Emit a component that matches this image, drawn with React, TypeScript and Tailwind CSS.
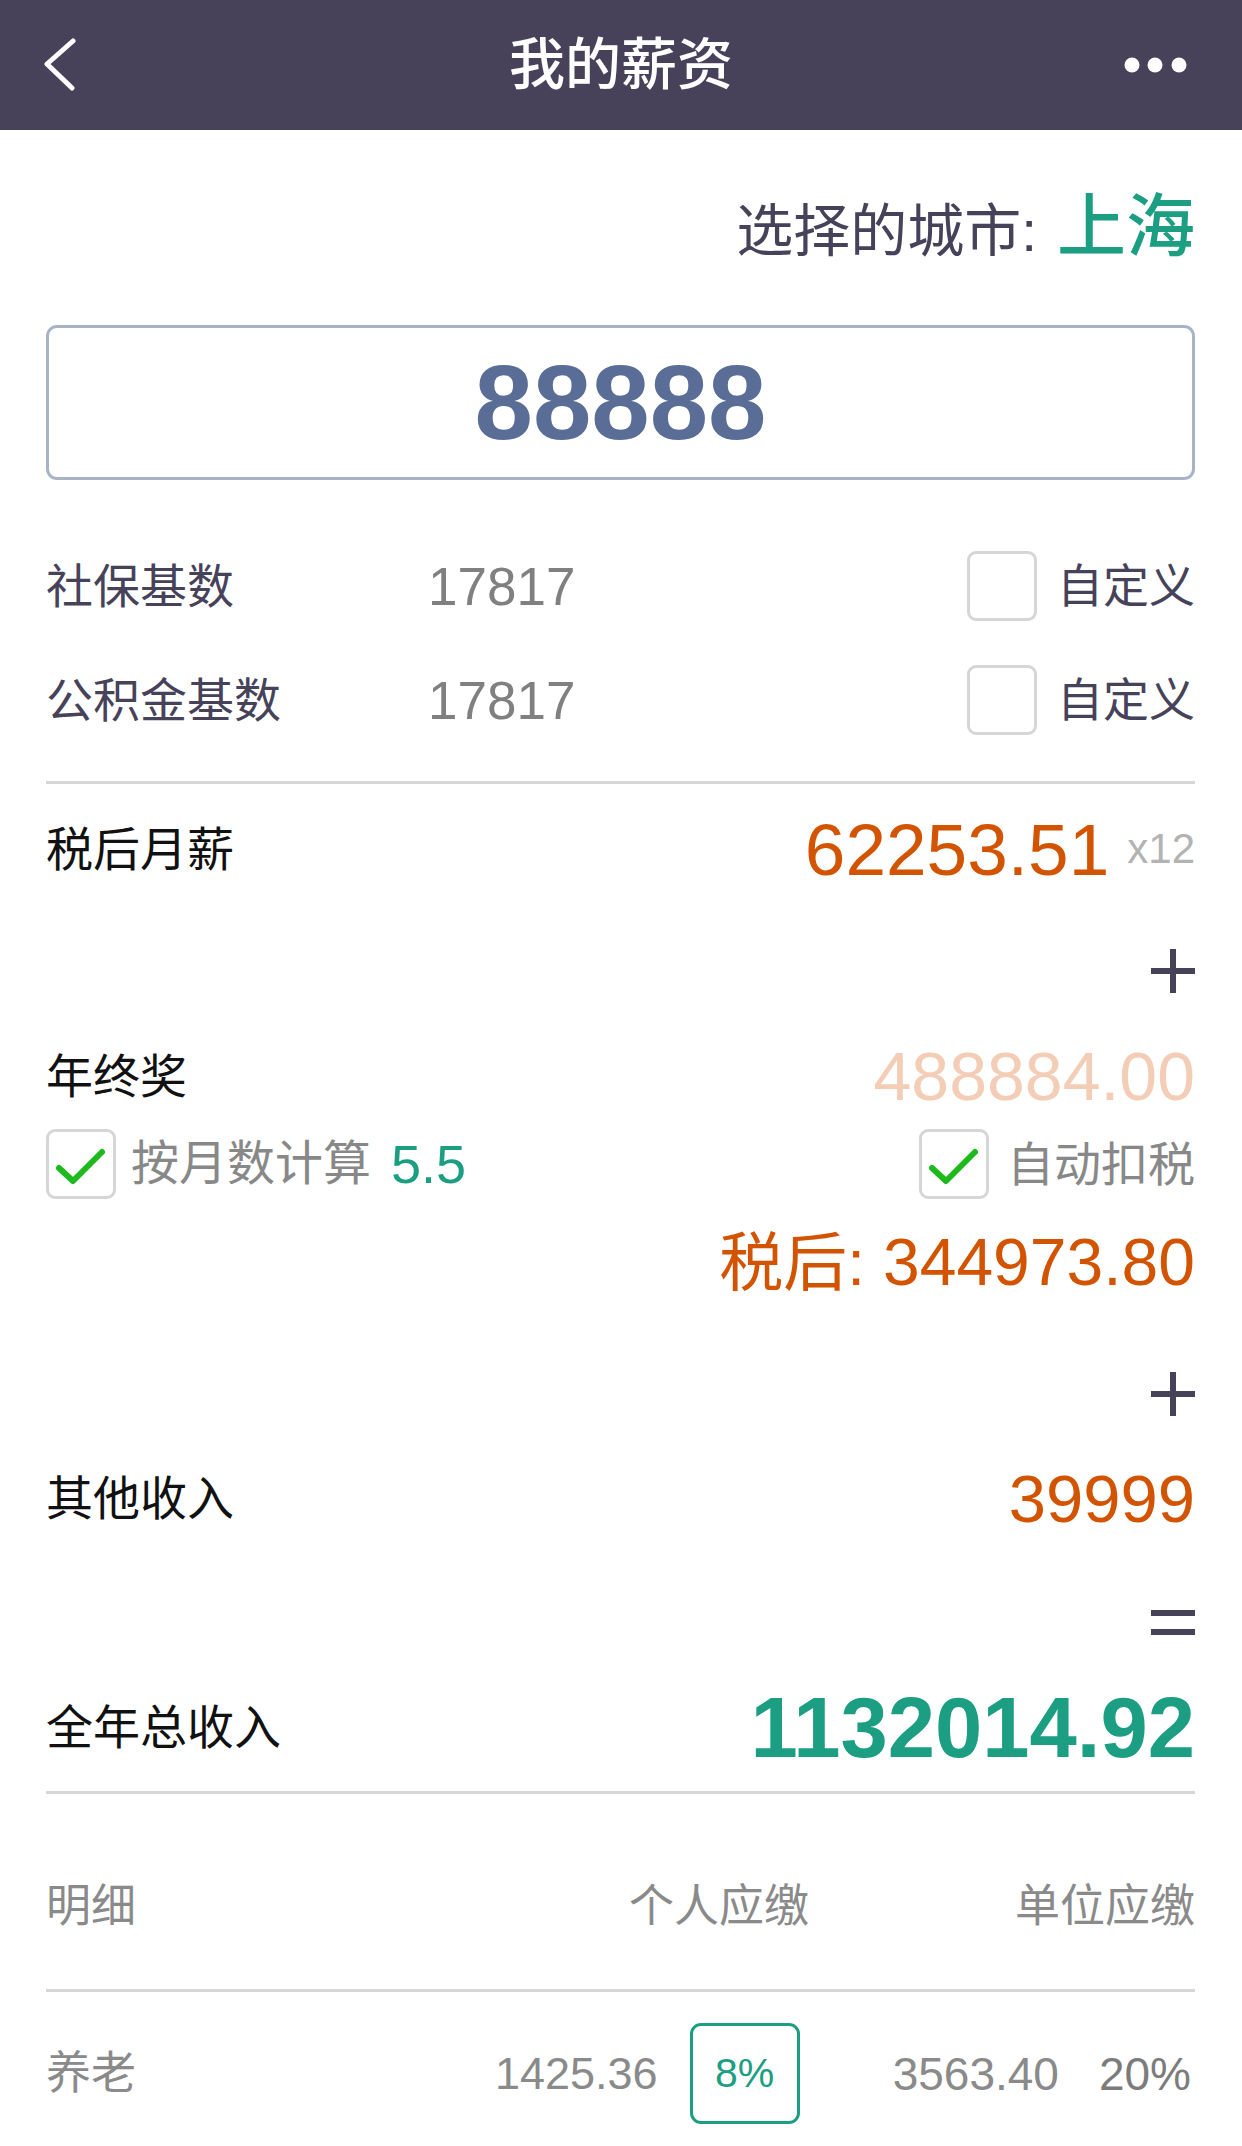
import React from 'react'

const GREEN = 'text-[#1b9e81]'

function Checkbox({ checked }: { checked?: boolean }) {
  return (
    <span className="flex size-[70px] shrink-0 items-center justify-center rounded-[9px] border-[3px] border-[#d6d6d6] bg-white">
      {checked && (
        <svg width="64" height="64" viewBox="0 0 64 64" fill="none">
          <path
            d="M10 36 L24 49 L53 20"
            stroke="#1db91d"
            strokeWidth="6"
            strokeLinecap="round"
            strokeLinejoin="round"
          />
        </svg>
      )}
    </span>
  )
}

function Plus() {
  return (
    <svg width="44" height="44" viewBox="0 0 44 44">
      <rect x="0" y="19" width="44" height="6" fill="#46425a" />
      <rect x="19" y="0" width="6" height="44" fill="#46425a" />
    </svg>
  )
}

function Equals() {
  return (
    <svg width="44" height="25" viewBox="0 0 44 25">
      <rect x="0" y="0" width="44" height="6" fill="#46425a" />
      <rect x="0" y="19" width="44" height="6" fill="#46425a" />
    </svg>
  )
}

function Header() {
  return (
    <div className="flex h-[130px] items-center bg-[#47425a]">
      <div className="flex w-[250px] items-center pl-[43px]">
        <svg width="36" height="54" viewBox="0 0 36 54" fill="none">
          <path
            d="M30 3 L4 26 L29 50"
            stroke="#ffffff"
            strokeWidth="5"
            strokeLinecap="round"
            strokeLinejoin="round"
          />
        </svg>
      </div>
      <div className="flex-1 text-center text-[56px] leading-none font-medium text-white">
        我的薪资
      </div>
      <div className="flex w-[250px] justify-end pr-[54px]">
        <svg width="64" height="16" viewBox="0 0 64 16">
          <circle cx="8" cy="8" r="7.5" fill="#ffffff" />
          <circle cx="31" cy="8" r="7.5" fill="#ffffff" />
          <circle cx="55" cy="8" r="7.5" fill="#ffffff" />
        </svg>
      </div>
    </div>
  )
}

function BaseRow({ label, value, className }: { label: string; value: string; className?: string }) {
  return (
    <div className={`flex h-[100px] items-center ${className ?? ''}`}>
      <span className="w-[382px] text-[47px] leading-none text-[#46425a]">{label}</span>
      <span className="text-[53px] leading-none text-[#808080]">{value}</span>
      <div className="ml-auto flex items-center gap-[20px]">
        <Checkbox />
        <span className="text-[46px] leading-none text-[#46425a]">自定义</span>
      </div>
    </div>
  )
}

export default function App() {
  return (
    <div className="min-h-[2146px] bg-white font-['Liberation_Sans','Noto_Sans_CJK_SC',sans-serif]">
      <Header />

      <div className="pr-[47px] pl-[46px]">
        {/* city */}
        <div className="flex h-[195px] items-center justify-end">
          <div className="flex items-baseline leading-none">
            <span className="text-[57px] text-[#46425a]">选择的城市:</span>
            <span className={`ml-[20px] text-[69px] font-medium ${GREEN}`}>上海</span>
          </div>
        </div>

        {/* salary input */}
        <div className="flex h-[155px] items-center justify-center rounded-[11px] border-[3px] border-[#a9b3c6] text-[105px] leading-none font-bold text-[#596d96]">
          88888
        </div>

        <BaseRow label="社保基数" value="17817" className="mt-[56px]" />
        <BaseRow label="公积金基数" value="17817" className="mt-[14px]" />

        <div className="mt-[31px] h-[3px] bg-[#d7d7d7]" />

        {/* monthly after tax */}
        <div className="mt-[15px] flex h-[100px] items-center justify-between">
          <span className="text-[47px] leading-none text-[#111111]">税后月薪</span>
          <div className="flex items-center leading-none">
            <span className="text-[73px] text-[#d35400]">62253.51</span>
            <span className="ml-[18px] text-[42px] text-[#b3b3b3]">x12</span>
          </div>
        </div>

        <div className="mt-[42px] flex h-[60px] items-center justify-end">
          <Plus />
        </div>

        {/* year-end bonus */}
        <div className="mt-[45px] flex h-[60px] items-center justify-between">
          <span className="text-[47px] leading-none text-[#111111]">年终奖</span>
          <span className="text-[68px] leading-none text-[#f3cdb6]">488884.00</span>
        </div>

        <div className="mt-[20px] flex h-[76px] items-center justify-between">
          <div className="flex items-center">
            <Checkbox checked />
            <span className="ml-[15px] text-[48px] leading-none text-[#888888]">按月数计算</span>
            <span className={`ml-[20px] text-[54px] leading-none ${GREEN}`}>5.5</span>
          </div>
          <div className="flex items-center">
            <Checkbox checked />
            <span className="ml-[18px] text-[47px] leading-none text-[#888888]">自动扣税</span>
          </div>
        </div>

        <div className="mt-[25px] flex h-[70px] items-center justify-end">
          <div className="flex items-baseline leading-none text-[#d35400]">
            <span className="text-[64px]">税后:</span>
            <span className="ml-[18px] text-[66px]">344973.80</span>
          </div>
        </div>

        <div className="mt-[67px] flex h-[60px] items-center justify-end">
          <Plus />
        </div>

        {/* other income */}
        <div className="mt-[39px] flex h-[70px] items-center justify-between">
          <span className="text-[47px] leading-none text-[#111111]">其他收入</span>
          <span className="text-[67px] leading-none text-[#d35400]">39999</span>
        </div>

        <div className="mt-[69px] flex h-[40px] items-center justify-end">
          <Equals />
        </div>

        {/* total */}
        <div className="mt-[35px] flex h-[100px] items-center justify-between">
          <span className="text-[47px] leading-none text-[#111111]">全年总收入</span>
          <span className={`text-[85px] leading-none font-bold ${GREEN}`}>1132014.92</span>
        </div>

        <div className="mt-[14px] h-[3px] bg-[#d7d7d7]" />

        {/* details table */}
        <div className="mt-[82px] flex h-[60px] items-center text-[45px] leading-none text-[#8a8a8a]">
          <span className="flex-1">明细</span>
          <span>个人应缴</span>
          <span className="ml-[206px]">单位应缴</span>
        </div>

        <div className="mt-[53px] h-[3px] bg-[#d7d7d7]" />

        <div className="mt-[31px] flex h-[101px] items-center leading-none text-[#8a8a8a]">
          <span className="flex-1 text-[45px]">养老</span>
          <span className="text-[45px]">1425.36</span>
          <span
            className={`ml-[32px] flex h-[101px] w-[110px] items-center justify-center rounded-[11px] border-[3px] border-[#1b9e81] text-[41px] ${GREEN}`}
          >
            8%
          </span>
          <span className="ml-[93px] text-[46px]">3563.40</span>
          <span className="mr-[4px] ml-[40px] text-[46px] text-[#7c7c7c]">20%</span>
        </div>
      </div>
    </div>
  )
}
